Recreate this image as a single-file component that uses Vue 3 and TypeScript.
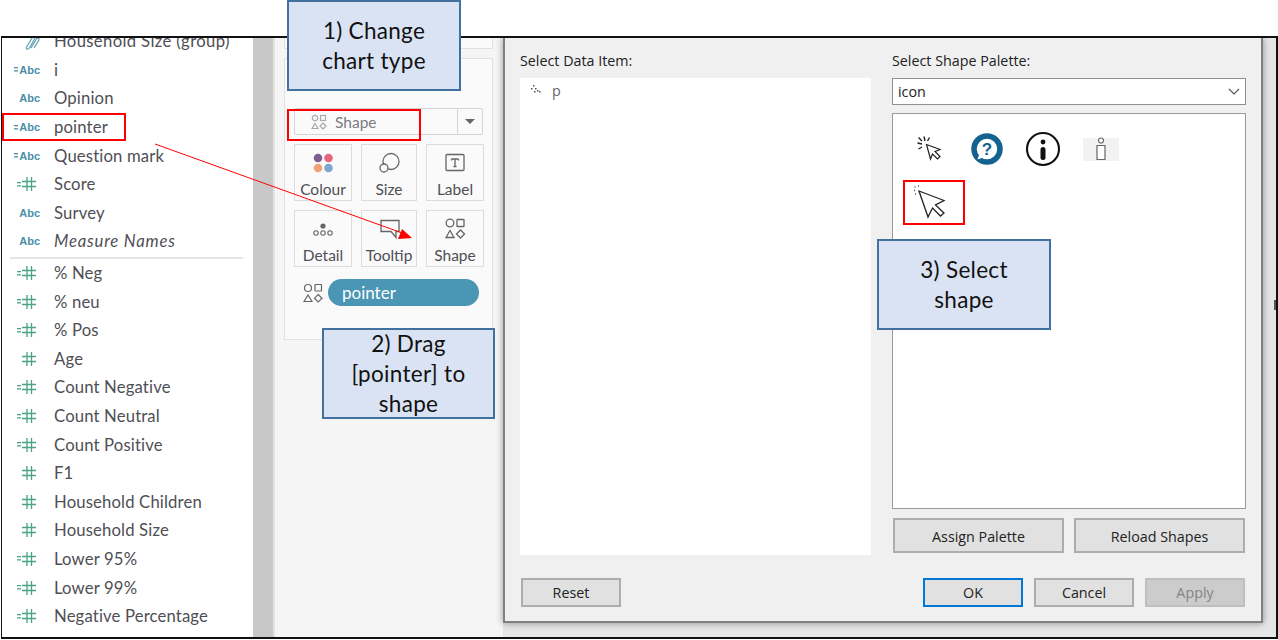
<script setup lang="ts">
type Field = { kind: 'abc' | 'num'; calc: boolean; name: string; italic?: boolean }
const topFields: Field[] = [
  { kind: 'abc', calc: true, name: 'i' },
  { kind: 'abc', calc: false, name: 'Opinion' },
  { kind: 'abc', calc: true, name: 'pointer' },
  { kind: 'abc', calc: true, name: 'Question mark' },
  { kind: 'num', calc: true, name: 'Score' },
  { kind: 'abc', calc: false, name: 'Survey' },
  { kind: 'abc', calc: false, name: 'Measure Names', italic: true },
]
const measures: Field[] = [
  { kind: 'num', calc: true, name: '% Neg' },
  { kind: 'num', calc: true, name: '% neu' },
  { kind: 'num', calc: true, name: '% Pos' },
  { kind: 'num', calc: false, name: 'Age' },
  { kind: 'num', calc: true, name: 'Count Negative' },
  { kind: 'num', calc: true, name: 'Count Neutral' },
  { kind: 'num', calc: true, name: 'Count Positive' },
  { kind: 'num', calc: false, name: 'F1' },
  { kind: 'num', calc: false, name: 'Household Children' },
  { kind: 'num', calc: false, name: 'Household Size' },
  { kind: 'num', calc: true, name: 'Lower 95%' },
  { kind: 'num', calc: true, name: 'Lower 99%' },
  { kind: 'num', calc: true, name: 'Negative Percentage' },
]
const fields = [...topFields.map(f => ({ ...f, sepAfter: f.name === 'Measure Names' })), ...measures.map(f => ({ ...f, sepAfter: false }))]
</script>

<template>
  <div class="page">
    <div class="frame">
      <aside class="fields">
        <div class="row clipped">
          <span class="ico">
            <svg class="clip" width="16" height="16" viewBox="0 0 16 16" fill="none" stroke="#5d9fb0" stroke-width="1.200"><path d="M2 13 8 3c1-1.500 3-.5 2.500 1L5.500 13c-1 1.500-3 1.500-3.500 0M7 13l5.500-9c1-1.500 3-.5 2.500 1l-5 8" /></svg>
          </span>
          <span class="name wide-name">Household Size (group)</span>
        </div>
        <template v-for="f in fields" :key="f.name">
          <div class="row">
            <span class="ico">
              <svg v-if="f.calc" class="eq" width="4" height="5" viewBox="0 0 4 5" :fill="f.kind === 'abc' ? '#4a8ea8' : '#4aa384'"><rect y="0" width="4" height="1.300" /><rect y="3.200" width="4" height="1.300" /></svg>
              <span v-if="f.kind === 'abc'" class="abc">Abc</span>
              <svg v-else class="hash" width="14" height="14" viewBox="0 0 14 14" stroke="#4aa384" stroke-width="1.300"><path d="M5 0v14M9.500 0v14M0 4.500h14M0 9.500h14" /></svg>
            </span>
            <span class="name" :class="{ it: f.italic }">{{ f.name }}</span>
          </div>
          <div v-if="f.sepAfter" class="sep"></div>
        </template>
      </aside>

      <div class="gutter"></div>

      <section class="marks">
        <div class="stub"></div>
        <div class="card">
          <div class="mark-select">
            <svg class="shapes-small" width="16" height="16" viewBox="0 0 16 16" fill="none" stroke="#a9a9a9" stroke-width="1.200"><circle cx="4" cy="4" r="2.700" /><rect x="9.500" y="1.500" width="5" height="5" /><path d="M4 9.500 7 14.500H1Z" /><path d="M12 9 15 12 12 15 9 12Z" /></svg>
            <span class="select-text">Shape</span>
            <span class="select-arrow"><i></i></span>
          </div>
          <div class="tiles">
            <div class="tile">
              <svg width="24" height="24" viewBox="0 0 24 24"><circle cx="7" cy="7" r="4.300" fill="#7d5f8f" /><circle cx="17.500" cy="7" r="4.300" fill="#e8647c" /><circle cx="7" cy="17" r="4.300" fill="#efa374" /><circle cx="17.500" cy="17" r="4.300" fill="#7ea7cf" /></svg>
              <span>Colour</span>
            </div>
            <div class="tile">
              <svg width="24" height="24" viewBox="0 0 24 24" fill="none" stroke="#666" stroke-width="1.300"><circle cx="14" cy="10.500" r="8" /><circle cx="7" cy="17" r="4" fill="#fafafa" /></svg>
              <span>Size</span>
            </div>
            <div class="tile">
              <svg width="24" height="24" viewBox="0 0 24 24" fill="none" stroke="#666" stroke-width="1.300"><rect x="3" y="3.500" width="18" height="16" rx="1" /><path d="M8.500 8h7M12 8v7.500M10.500 15.500h3M8.500 8v1.500M15.500 8v1.500" /></svg>
              <span>Label</span>
            </div>
            <div class="tile">
              <svg width="24" height="24" viewBox="0 0 24 24" fill="none" stroke="#666" stroke-width="1.100"><circle cx="12" cy="9" r="2.600" fill="#666" stroke="none" /><circle cx="5" cy="16" r="2.200" /><circle cx="12" cy="16" r="2.200" /><circle cx="19" cy="16" r="2.200" /></svg>
              <span>Detail</span>
            </div>
            <div class="tile">
              <svg width="24" height="24" viewBox="0 0 24 24" fill="none" stroke="#666" stroke-width="1.300"><path d="M3 3.500h18v11h-3v6l-5-6H3Z" transform="translate(1 0)" /></svg>
              <span>Tooltip</span>
            </div>
            <div class="tile">
              <svg width="24" height="24" viewBox="0 0 24 24" fill="none" stroke="#666" stroke-width="1.300"><circle cx="7" cy="6" r="3.800" /><rect x="14" y="2.500" width="7" height="7" rx=".6" /><path d="M7 13.500 11 20.500H3Z" /><path d="M17.500 13 21.500 17 17.500 21 13.500 17Z" /></svg>
              <span>Shape</span>
            </div>
          </div>
          <div class="encoding">
            <svg width="20" height="20" viewBox="0 0 20 20" fill="none" stroke="#666" stroke-width="1.200"><circle cx="5" cy="5" r="3.500" /><rect x="12" y="1.500" width="6.500" height="6.500" rx=".5" /><path d="M5 12 9 18.500H1Z" /><path d="M15.200 11.500 19 15.200 15.200 19 11.500 15.200Z" /></svg>
            <span class="pill">pointer</span>
          </div>
        </div>
      </section>

      <div class="workspace">
        <section class="dialog">
          <div class="dialog-columns">
            <div class="col-left">
              <div class="dlg-label">Select Data Item:</div>
              <div class="list">
                <svg width="12" height="12" viewBox="0 0 12 12" fill="#555"><rect x="3" y="1" width="1.500" height="1.500" /><rect x="1" y="4" width="1.500" height="1.500" /><rect x="5" y="4" width="1.500" height="1.500" /><rect x="7" y="6" width="1.500" height="1.500" /><rect x="4" y="7" width="1.500" height="1.500" /><rect x="9" y="7" width="1.500" height="1.500" /></svg>
                <span>p</span>
              </div>
            </div>
            <div class="col-right">
              <div class="dlg-label">Select Shape Palette:</div>
              <div class="combo">
                <span>icon</span>
                <svg width="12" height="7" viewBox="0 0 12 7" fill="none" stroke="#555" stroke-width="1.100"><path d="M1 1 6 6 11 1" /></svg>
              </div>
              <div class="palette">
                <div class="shape-row">
                  <svg class="p1" width="28" height="28" viewBox="0 0 28 28" fill="none" stroke="#222" stroke-width="1.200"><path d="M11.500 10.500 25 15.500 20 17.500 25 22.500 22.500 25 17.500 20 15.500 25Z" fill="#fff" /><path d="M9 2.500 10 7M2.500 9 7 10M3.500 3.500 7 7M14.500 3.500 12.500 7M3.500 15 7 13" stroke-width="1.400" /></svg>
                  <svg class="p2" width="32" height="32" viewBox="0 0 32 32"><circle cx="16" cy="16" r="13" fill="#fff" stroke="#13628f" stroke-width="5.500" /><path d="M9 19 6.500 26.500 14 24Z" fill="#fff" /><text x="16" y="21.500" text-anchor="middle" class="q">?</text></svg>
                  <svg class="p3" width="36" height="36" viewBox="0 0 36 36"><circle cx="18" cy="18" r="16" fill="#fff" stroke="#111" stroke-width="2.100" /><circle cx="18" cy="11" r="2.400" fill="#111" /><rect x="15.500" y="16" width="5" height="13" rx="2.500" fill="#111" /></svg>
                  <div class="p4">
                    <svg width="14" height="24" viewBox="0 0 14 24" fill="#fff" stroke="#666" stroke-width="1.200"><circle cx="7" cy="3.500" r="2.500" /><path d="M3 8.500h8V22.500H3Z" /></svg>
                  </div>
                </div>
                <div class="shape-row second">
                  <svg width="34" height="34" viewBox="0 0 34 34" fill="none" stroke="#222" stroke-width="1.300"><path d="M6 6 31 15.500 22.500 20 31 28 27.500 31 19.500 23 15 32Z" fill="#fff" /><path d="M1.500 2h1M5 1h1M1 5.500h1M2 9h1" stroke="#555" stroke-width="1.500" /></svg>
                </div>
              </div>
              <div class="btn-row">
                <button class="btn wide">Assign Palette</button>
                <button class="btn wide">Reload Shapes</button>
              </div>
            </div>
          </div>
          <div class="dialog-foot">
            <button class="btn small">Reset</button>
            <div class="foot-right">
              <button class="btn small primary">OK</button>
              <button class="btn small">Cancel</button>
              <button class="btn small disabled">Apply</button>
            </div>
          </div>
        </section>
      </div>
    </div>

    <div class="notch"></div>
    <svg class="arrow" width="1278" height="640" viewBox="0 0 1278 640" fill="none">
      <path d="M155 144 405 234" stroke="#f00" stroke-width="1" />
      <path d="M402 229 412 238 398 239Z" fill="#f00" />
    </svg>
    <div class="redbox rb1"></div>
    <div class="redbox rb2"></div>
    <div class="redbox rb3"></div>
    <div class="callout c1">1) Change<br />chart type</div>
    <div class="callout c2">2) Drag<br />[pointer] to<br />shape</div>
    <div class="callout c3">3) Select<br />shape</div>
  </div>
</template>

<style>
html, body { margin: 0; background: #fff; overflow: hidden; }
</style>

<style scoped>
.page { position: relative; width: 1278px; height: 640px; overflow: hidden; background: #fff; padding-top: 36px; box-sizing: border-box; }
.frame { display: flex; height: 603px; box-sizing: border-box; margin-left: 1px; width: 1277px; border: 2px solid #111; border-left-width: 1px; background: #fff; overflow: hidden; }

.fields { width: 251px; flex: none; font-family: Lato, sans-serif; font-size: 16.700px; color: #4f4f55; box-sizing: border-box; overflow: hidden; }
.row { display: flex; align-items: center; height: 28.600px; }
.clipped { margin-top: -11px; }
.ico { width: 52px; flex: none; display: flex; justify-content: flex-end; align-items: center; box-sizing: border-box; height: 100%; }
.clip { margin-right: 14px; margin-top: 4px; }
.abc { font: 700 11px "Liberation Sans", sans-serif; color: #4a8ea8; margin-right: 14px; }
.hash { margin-right: 18px; }
.eq { margin-right: 1px; }
.name { white-space: nowrap; letter-spacing: .15px; }
.wide-name { letter-spacing: .35px; }
.name.it { font-style: italic; letter-spacing: .8px; }
.sep { height: 2px; background: #e4e4e4; margin: 1px 10px 0 8px; }

.gutter { width: 20px; flex: none; background: #c8c8c8; }

.marks { width: 230px; flex: none; background: #f5f5f5; padding-left: 9px; box-sizing: border-box; border-left: 2px solid #e2e2e2; }
.stub { height: 11px; border: 1px solid #e1e1e1; border-top: 0; margin-bottom: 9px; width: 209px; background: #fafafa; box-sizing: border-box; }
.card { border: 1px solid #e1e1e1; width: 209px; box-sizing: border-box; height: 282px; padding: 49px 9px 0 9px; background: #fafafa; }
.mark-select { height: 27px; border: 1px solid #d4d4d4; border-radius: 2px; display: flex; align-items: center; box-sizing: border-box; font: 15.500px Lato, sans-serif; color: #7c7c82; }
.shapes-small { margin-left: 16px; }
.select-text { margin-left: 8px; flex: 1; }
.select-arrow { width: 24px; height: 100%; border-left: 1px solid #d4d4d4; display: flex; align-items: center; justify-content: center; }
.select-arrow i { width: 0; height: 0; border: 5px solid transparent; border-top-color: #666; border-bottom: 0; }
.tiles { display: grid; grid-template-columns: 58px 56px 58px; gap: 9px; margin-top: 9px; }
.tile { height: 57px; box-sizing: border-box; border: 1px solid #dcdcdc; display: flex; flex-direction: column; align-items: center; padding-top: 6px; font: 15.500px/19px Lato, sans-serif; color: #4f4f55; }
.tile span { margin-top: 5px; }
.encoding { display: flex; align-items: center; gap: 5px; margin-top: 12px; margin-left: 9px; }
.pill { width: 151px; height: 27px; border-radius: 14px; background: #4a96b4; color: #fff; font: 17px Lato, sans-serif; padding-left: 14px; box-sizing: border-box; display: flex; align-items: center; }

.workspace { flex: 1; min-width: 0; background: #e6e6e6; }
.dialog { width: 760px; background: #f0f0f0; border: 2px solid #808080; border-top: 0; height: 585px; box-sizing: border-box; padding: 14px 15px 0 15px; font: 14.300px "Open Sans", sans-serif; color: #222; box-shadow: 0 0 7px rgba(0,0,0,.4); }
.dialog-columns { display: flex; gap: 21px; height: 504px; }
.col-left { width: 351px; display: flex; flex-direction: column; }
.col-right { width: 354px; display: flex; flex-direction: column; }
.dlg-label { height: 26px; line-height: 18px; }
.list { height: 477px; background: #fff; padding: 6px 0 0 10px; box-sizing: border-box; display: flex; align-items: flex-start; gap: 10px; color: #666; }
.list span { line-height: 14px; }
.combo { height: 27px; border: 1px solid #8f8f8f; background: #fff; box-sizing: border-box; display: flex; justify-content: space-between; align-items: center; padding: 0 5px; }
.palette { margin-top: 8px; height: 396px; border: 1px solid #9a9a9a; background: #fff; box-sizing: border-box; padding: 17px 0 0 22px; }
.shape-row { display: flex; align-items: center; height: 36px; }
.p1 { margin-right: 28px; margin-top: -2px; }
.p2 { margin-right: 22px; }
.q { font: 700 17px "Liberation Sans", sans-serif; fill: #13628f; }
.p4 { width: 36px; height: 23px; margin-left: 22px; background: #f2f2f2; display: flex; justify-content: center; align-items: center; }
.second { margin-top: 17px; margin-left: -2px; }
.btn-row { display: flex; justify-content: space-between; margin-top: 9px; padding: 0 1px; }
.btn { box-sizing: border-box; background: #e1e1e1; border: 2px solid #adadad; color: #222; font: 14.300px "Open Sans", sans-serif; padding: 0 0 0 0; }
.wide { width: 171px; height: 35px; padding-top: 2px; }
.dialog-foot { display: flex; justify-content: space-between; margin-top: 22px; padding-left: 1px; }
.foot-right { display: flex; gap: 11px; margin-right: 1px; }
.small { width: 100px; height: 29px; }
.primary { border-color: #0078d7; }
.disabled { background: #ccc; border-color: #bfbfbf; color: #838383; }

.notch { position: absolute; left: 1274px; top: 300px; width: 2px; height: 10px; background: #555; }
.arrow { position: absolute; left: 0; top: 0; pointer-events: none; }
.redbox { position: absolute; border: 2px solid #f00; box-sizing: border-box; }
.rb1 { left: 2px; top: 113px; width: 124px; height: 28px; }
.rb2 { left: 287px; top: 109px; width: 134px; height: 32px; }
.rb3 { left: 903px; top: 180px; width: 62px; height: 45px; }
.callout { position: absolute; box-sizing: border-box; background: #dae3f3; border: 2px solid #41719c; color: #111; font: 22.500px/30px Lato, sans-serif; letter-spacing: .3px; text-align: center; display: flex; align-items: center; justify-content: center; }
.c1 { left: 287px; top: 0; width: 174px; height: 91px; }
.c2 { left: 322px; top: 328px; width: 173px; height: 91px; }
.c3 { left: 877px; top: 239px; width: 174px; height: 91px; }
</style>
